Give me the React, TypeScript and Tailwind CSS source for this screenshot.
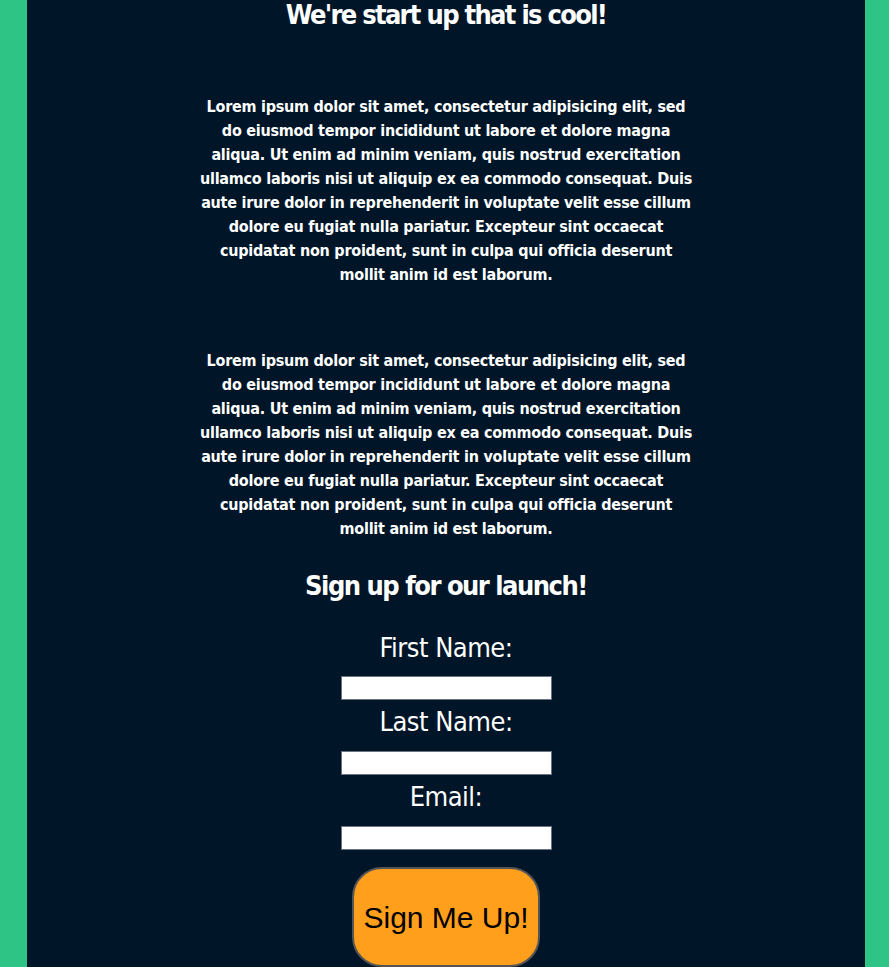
import React from "react"

const loremLines = [
	"Lorem ipsum dolor sit amet, consectetur adipisicing elit, sed",
	"do eiusmod tempor incididunt ut labore et dolore magna",
	"aliqua. Ut enim ad minim veniam, quis nostrud exercitation",
	"ullamco laboris nisi ut aliquip ex ea commodo consequat. Duis",
	"aute irure dolor in reprehenderit in voluptate velit esse cillum",
	"dolore eu fugiat nulla pariatur. Excepteur sint occaecat",
	"cupidatat non proident, sunt in culpa qui officia deserunt",
	"mollit anim id est laborum.",
]

const Lorem = ({ className }: { className: string }) => (
	<p className={`${className} w-[560px] text-center text-[16px] leading-[24px] font-bold tracking-[-0.25px]`}>
		{loremLines.map((line, i) => (
			<span key={`l-${i}`} className="block">
				{line}
			</span>
		))}
	</p>
)

const Field = ({ label, first }: { label: string; first?: boolean }) => (
	<>
		<label className={`text-[27px] leading-[44px] text-white tracking-[-0.5px] ${first ? "mb-[6px]" : "mb-[7px]"}`}>
			{label}
		</label>
		<input className="block w-[211px] h-[24px] bg-white border border-gray-500" type="text" />
	</>
)

const App: React.FC = () => {
	return (
		<div className="bg-[#2ec486] min-h-screen pl-[27px] pr-[24px] font-['DejaVu_Sans_Condensed','DejaVu_Sans',sans-serif]">
			<div className="bg-[#001628] flex flex-col items-center text-white pb-10">
				<h1 className="text-[27px] font-bold leading-[30px] tracking-[-1.7px] mt-0">We're start up that is cool!</h1>
				<Lorem className="mt-[65px]" />
				<Lorem className="mt-[62px]" />
				<h2 className="mt-[27px] text-[27px] font-bold leading-[36px] tracking-[-1.5px]">Sign up for our launch!</h2>
				<div className="mt-[22px] flex flex-col items-center">
					<Field label="First Name:" first />
					<Field label="Last Name:" />
					<Field label="Email:" />
				</div>
				<button className="mt-[17px] w-[188px] h-[100px] rounded-[30px] bg-[#ff9f1c] border-2 border-[#555] text-black text-[30px] font-['Liberation_Sans',Arial,sans-serif]">
					Sign Me Up!
				</button>
			</div>
		</div>
	)
}

export default App
